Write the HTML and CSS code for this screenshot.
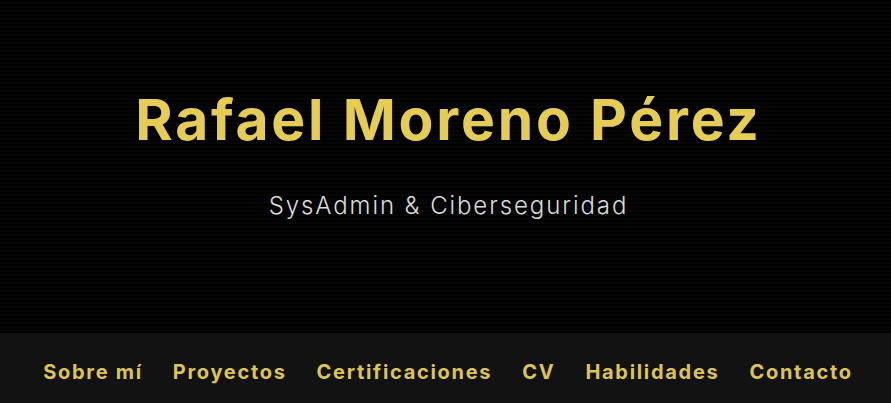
FILE: index.html
```html
<!DOCTYPE html>
<html lang="es">
<head>
<meta charset="utf-8">
<title>Rafael Moreno Pérez</title>
<link rel="stylesheet" href="styles.css">
</head>
<body>
<header class="hero">
  <h1 class="hero-title">Rafael Moreno Pérez</h1>
  <p class="hero-subtitle">SysAdmin &amp; Ciberseguridad</p>
</header>
<nav class="nav">
  <a class="nav-link" href="#sobre">Sobre mí</a>
  <a class="nav-link" href="#proyectos">Proyectos</a>
  <a class="nav-link" href="#certificaciones">Certificaciones</a>
  <a class="nav-link" href="#cv">CV</a>
  <a class="nav-link" href="#habilidades">Habilidades</a>
  <a class="nav-link" href="#contacto">Contacto</a>
</nav>
</body>
</html>
```
FILE: styles.css
```css
* { box-sizing: border-box; }
html, body {
  margin: 0;
  padding: 0;
  background: #000;
  font-family: Inter, "Open Sans", sans-serif;
}
.hero {
  height: 333px;
  padding-top: 92px;
  padding-left: 6px;
  text-align: center;
  background-color: #000;
  background-image: repeating-linear-gradient(to bottom, #000 0px, #000 2px, #070707 2px, #070707 4px);
}
.hero-title {
  margin: 0;
  font-size: 57px;
  line-height: 56px;
  font-weight: 700;
  letter-spacing: 2.8px;
  color: #e5cd55;
}
.hero-subtitle {
  margin: 46px 0 0;
  font-size: 24px;
  line-height: 24px;
  font-weight: 300;
  letter-spacing: 1.9px;
  color: #dcdcdc;
}
.nav {
  height: 70px;
  padding-top: 29px;
  padding-left: 5px;
  display: flex;
  justify-content: center;
  gap: 30px;
  background: #121212;
}
.nav-link {
  font-size: 20px;
  line-height: 20px;
  font-weight: 700;
  letter-spacing: 1.7px;
  color: #dcc457;
  text-decoration: none;
}
```
